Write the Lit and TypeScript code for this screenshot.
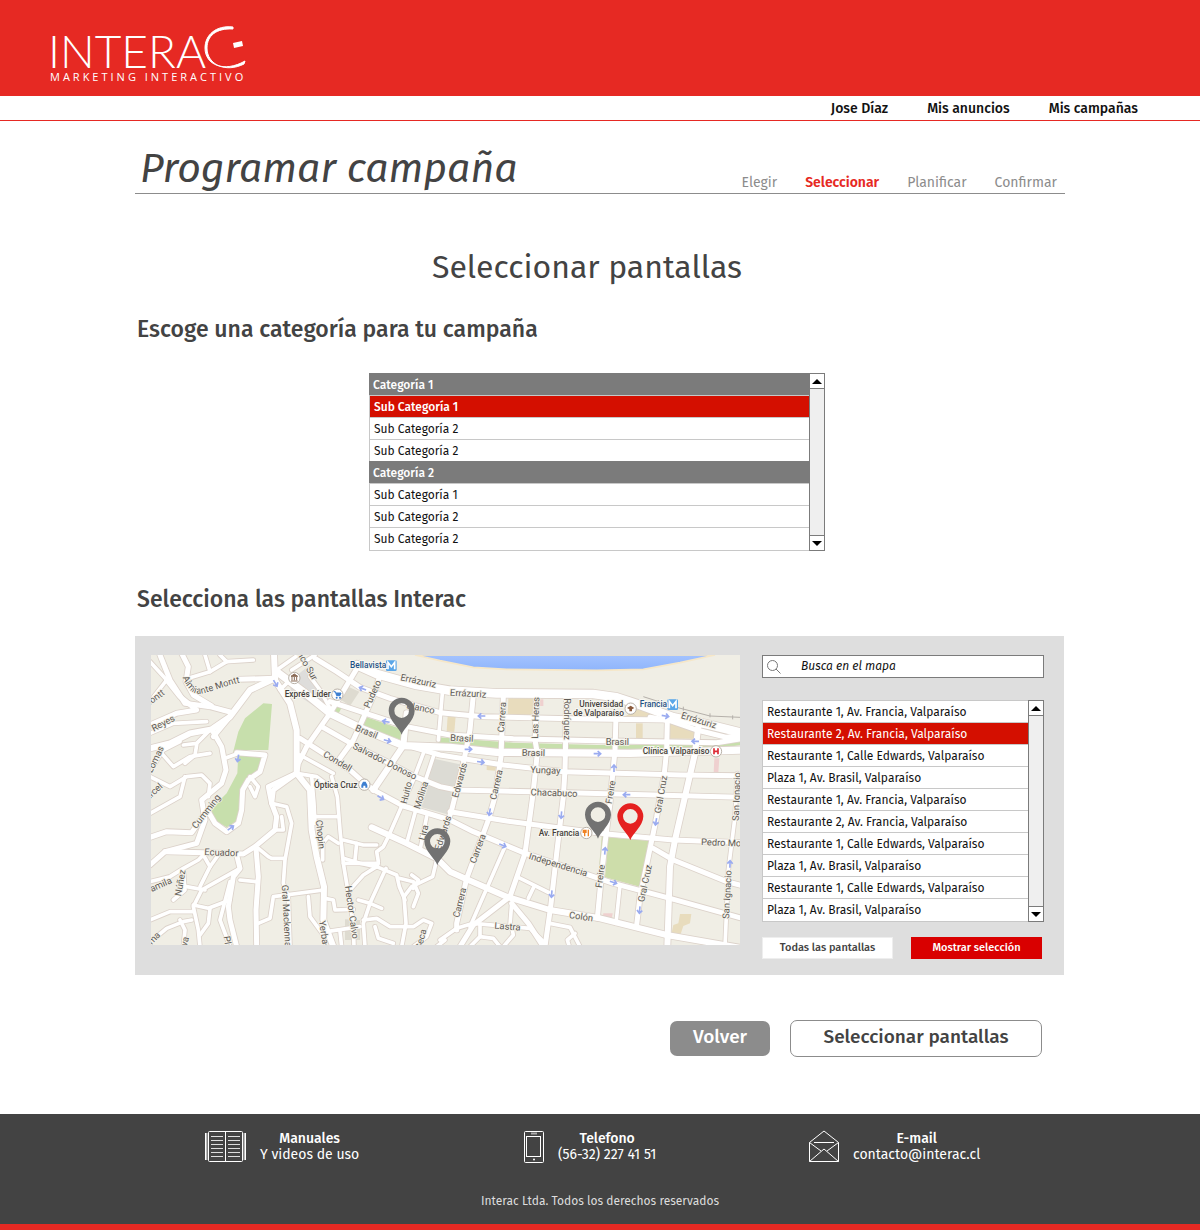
import { LitElement, html, svg, css } from "lit";
import { customElement, property, state } from "lit/decorators.js";
import { classMap } from "lit/directives/class-map.js";

const MAJOR = 22;
const MID = 15;
const MINOR = 11;

/* Streets: [width, points]. */
const ROADS: [number, string][] = [
  // east grid, west-east streets
  [26, "680,105 740,132 860,165 960,182 1100,190 1390,192 1460,202 1530,225 1630,262 1740,285 1840,310"],
  [MID, "1560,262 1620,272 1700,300 1790,322 1840,316"],
  [MID, "555,85 620,125 690,172 780,205 930,248 1060,260 1320,266 1610,270"],
  [MID, "600,215 700,248 830,290 960,315 1150,326 1400,332 1760,338 1840,325"],
  [MAJOR, "440,125 520,185 600,250 700,298 820,347 960,352 1100,367 1500,370 1840,360"],
  [MID, "850,352 930,375 1120,405 1300,425 1650,435 1840,437"],
  [MID, "575,290 680,350 780,400 855,440 930,470 980,480 1200,485 1840,502"],
  [MID, "960,545 1130,573 1430,612 1630,630 1840,638"],
  [MID, "510,325 580,370 660,420 710,465 740,485 820,528 960,570 1030,605 1180,668 1450,760 1620,805 1840,866"],
  [18, "725,592 830,640 920,685 960,725 1010,748 1130,800 1260,840 1410,865 1610,915 1840,955"],
  [MID, "1570,655 1630,690 1790,755 1840,768"],
  // east grid, north-south streets
  [MINOR, "937,190 925,330"],
  [MID, "1030,195 1020,300 1000,400 965,540 945,600 920,685"],
  [MID, "1120,200 1113,380 1095,500 1075,570 1010,745 980,880 980,900"],
  [MINOR, "1125,650 1020,890"],
  [MID, "1220,195 1215,330 1222,370 1208,500 1185,670 1140,800 1030,885 990,950"],
  [MID, "1310,195 1305,420 1300,500 1280,670 1262,830 1245,950"],
  [MID, "1458,260 1455,360 1440,520 1425,640 1412,760 1402,865"],
  [MINOR, "1470,765 1458,880"],
  [MID, "1612,270 1610,360 1602,440 1580,560 1555,680 1530,800 1520,885"],
  [18, "1705,290 1695,370 1665,500 1635,630 1620,710 1612,950"],
  [MINOR, "1822,430 1815,560 1795,720 1785,950"],
  [MINOR, "1165,742 1265,792"],
  [MINOR, "1212,770 1195,805"],
  [MID, "1145,820 1195,880 1240,950"],
  [MINOR, "1145,820 1140,885"],
  [MINOR, "930,930 980,895 1030,880 1200,895 1240,935"],
  [MINOR, "1050,885 1050,920 1020,950"],
  [MINOR, "1050,920 1090,925 1110,950"],
  [MINOR, "1145,890 1150,915 1120,950"],
  [MINOR, "1260,880 1320,892 1350,950"],
  [MINOR, "1335,910 1312,930 1318,950"],
  // centre
  [MID, "750,135 735,185 700,265 670,330 630,385"],
  [MID, "690,100 600,250 530,350 505,400 500,430 415,470 425,520"],
  [MINOR, "485,120 555,75"],
  [MINOR, "450,180 490,140"],
  [MINOR, "540,140 570,180 605,245"],
  [18, "830,250 820,347 730,480"],
  [MINOR, "880,370 850,450 810,540 775,620 760,650 740,665 745,695"],
  [MINOR, "910,380 860,530 830,640"],
  [MINOR, "890,560 870,660"],
  [MINOR, "510,375 610,430"],
  [MINOR, "640,700 745,700 740,710 700,735 655,785"],
  [MINOR, "640,685 690,700 745,712 800,735 808,770 825,810"],
  [MINOR, "680,640 675,690"],
  [MINOR, "640,630 700,645 740,645"],
  [MINOR, "768,715 720,820 700,880 705,950"],
  [MINOR, "920,690 908,740 845,770 822,800 828,880 815,950"],
  [MINOR, "808,745 850,755 865,790 850,830"],
  [MINOR, "845,735 865,750 850,775"],
  [MINOR, "700,870 740,865 780,890 850,890 880,870 905,880 890,920 850,950"],
  [MINOR, "735,890 745,925 790,940"],
  [MINOR, "685,810 720,820 755,835"],
  [MINOR, "920,950 945,930"],
  // western hills
  [18, "432,70 435,150 480,220 500,300 500,430 540,480 545,600 560,680 582,770 580,870 610,950"],
  [MINOR, "545,440 552,520 555,580"],
  [MINOR, "605,440 622,500 630,600 640,700 655,790 670,880 672,950"],
  [MINOR, "500,430 560,440 600,470"],
  [MINOR, "555,560 620,560"],
  [MINOR, "625,640 595,620 578,640 578,690"],
  [MINOR, "440,120 500,78"],
  [18, "435,145 360,180 300,260 245,298 180,310 120,340 60,355"],
  [MID, "325,148 435,145"],
  [MID, "90,75 120,150 165,220 240,230 300,246"],
  [MID, "155,70 175,110 168,155 190,195 245,228"],
  [MINOR, "60,95 110,150 60,215"],
  [MINOR, "175,145 240,125 290,95 370,90"],
  [MINOR, "240,125 225,75"],
  [MINOR, "290,95 270,75"],
  [MID, "110,150 150,200 200,240 140,250 60,285"],
  [MINOR, "60,310 130,280 230,275"],
  [MID, "245,298 275,350 288,420 275,460 215,510 225,570 200,640 105,665 60,705"],
  [MID, "60,622 110,605 185,608 225,550"],
  [MID, "300,260 250,320"],
  [MINOR, "240,300 200,340 160,345"],
  [MINOR, "200,345 195,375 165,400"],
  [MINOR, "95,370 130,410 180,380 240,370"],
  [MINOR, "75,400 100,360 150,335"],
  [MINOR, "60,440 120,470 170,440 215,435 240,460 235,500"],
  [MINOR, "60,550 150,500 165,440"],
  [MINOR, "285,385 320,372"],
  [MID, "320,368 405,375 390,425 355,450 338,480 335,540 325,580 290,605 255,580 235,545"],
  [MID, "500,430 430,480 425,520 440,560 435,600 375,650 340,672 220,668 105,665"],
  [MINOR, "360,440 385,470 375,500 360,470"],
  [MINOR, "425,520 470,530 485,580 465,690 460,760 475,800 480,950"],
  [MINOR, "435,600 460,600 455,560"],
  [MINOR, "385,655 415,680 425,685 465,685"],
  [MID, "378,655 385,740 378,840 380,950"],
  [MINOR, "385,880 420,865 430,800 580,780"],
  [MINOR, "535,800 540,860 580,915"],
  [MINOR, "585,805 610,810 615,840 670,838"],
  [MINOR, "590,905 690,890"],
  [MINOR, "630,905 635,950"],
  [MID, "320,675 330,715 310,740 295,830 300,870 320,950"],
  [MINOR, "330,715 250,760 215,780 190,830 205,900 210,950"],
  [MINOR, "300,755 270,870 300,950"],
  [MINOR, "330,750 378,755"],
  [MINOR, "60,755 120,740 160,715 205,690 230,665"],
  [MINOR, "265,675 240,710 210,770"],
  [MINOR, "220,675 240,710"],
  [MINOR, "170,770 225,780"],
  [MINOR, "160,720 165,780 130,810"],
  [MINOR, "60,870 120,845 190,845"],
  [MINOR, "80,920 110,895 160,875 185,870"],
  [MINOR, "150,870 165,900 160,950"],
  [MINOR, "190,825 235,835 300,810"],
  [MINOR, "240,835 235,880 210,915"],
];

const AREAS: [string, string][] = [
  ["#c7dfac", "400,220 426,222 415,360 325,360 308,372 325,305 345,265"],
  ["#c7dfac", "325,368 400,375 385,425 350,445 332,500 325,570 290,592 262,575 235,545 290,490 322,430"],
  ["#c7dfac", "692,256 822,300 812,330 684,280"],
  ["#c7dfac", "618,222 636,230 625,252 610,245"],
  ["#c7dfac", "925,322 1150,338 1400,345 1760,345 1830,336 1830,345 1760,358 1400,362 1100,355 925,342"],
  ["#cdddaa", "1435,622 1555,632 1535,772 1425,742"],
  ["#cdddaa", "1415,620 1425,622 1412,715 1407,715"],
  ["#dcdbd4", "905,385 1000,405 960,555 870,530"],
  ["#dedddb", "495,140 540,105 595,235 570,240 480,180"],
  ["#dedbd0", "650,168 688,185 660,228 634,210"],
  ["#e8dcbd", "1135,205 1210,205 1208,255 1133,255"],
  ["#e8dcbd", "953,258 977,258 973,306 950,304"],
  ["#e8dcbd", "1518,280 1538,280 1538,325 1518,325"],
  ["#e8dcbd", "1618,272 1698,295 1694,326 1618,326"],
  ["#e8dcbd", "1480,262 1530,235 1600,262"],
  ["#e8dcbd", "1070,406 1100,408 1095,422 1070,420"],
  ["#e8dcbd", "1650,852 1684,852 1680,880 1660,888 1652,912 1625,908 1630,885 1645,880"],
  ["#efd0cf", "1753,385 1768,385 1765,428 1751,428"],
  ["#efd0cf", "1228,208 1240,208 1240,228 1228,228"],
  ["#efd0cf", "1420,850 1448,850 1445,868 1418,866"],
  ["#dedbd0", "645,868 690,870 690,930 645,930"],
];

/* Street names: [text, x, y, rotation]. */
const STREETS: [string, number, number, number][] = [
  ["Errázuriz", 863, 162, 12],
  ["Errázuriz", 1014, 200, 3],
  ["Errázuriz", 1704, 280, 17],
  ["Brasil", 706, 314, 22],
  ["Brasil", 995, 334, 3],
  ["Brasil", 1462, 345, 0],
  ["Brasil", 1210, 378, 1],
  ["Yungay", 1246, 430, 2],
  ["Chacabuco", 1272, 498, 2],
  ["Condell", 618, 402, 31],
  ["Salvador Donoso", 760, 402, 27],
  ["Pudeto", 736, 196, -66],
  ["Blanco", 870, 243, 12],
  ["Huito", 838, 490, -76],
  ["Molina", 882, 498, -72],
  ["Lira", 890, 610, -76],
  ["Edwards", 998, 453, -75],
  ["Edwards", 948, 612, -72],
  ["Carrera", 1125, 262, -86],
  ["Carrera", 1108, 466, -77],
  ["Carrera", 1052, 659, -70],
  ["Carrera", 998, 820, -76],
  ["Las Heras", 1226, 264, -88],
  ["Rodríguez", 1303, 267, 90],
  ["Freire", 1451, 488, -80],
  ["Freire", 1420, 740, -82],
  ["Gral Cruz", 1602, 495, -80],
  ["Gral Cruz", 1554, 762, -78],
  ["San Ignacio", 1829, 500, -88],
  ["San Ignacio", 1801, 794, -87],
  ["Independencia", 1282, 713, 17],
  ["Pedro Montt", 1790, 648, 2],
  ["Colón", 1352, 869, 8],
  ["Lastra", 1132, 899, 4],
  ["Chopin", 562, 614, 84],
  ["Hector Calvo", 656, 848, 82],
  ["Gral Mackenna", 460, 858, 87],
  ["Yerbas Buenas", 580, 965, 82],
  ["Pla", 284, 940, 80],
  ["Ecuador", 274, 677, 2],
  ["Cumming", 236, 550, -52],
  ["Reyes", 104, 288, -28],
  ["Montt", 76, 214, -36],
  ["Camila", 88, 776, -24],
  ["Núñez", 160, 760, -80],
  ["Marcel", 68, 500, -42],
  ["Lomas", 84, 392, -64],
  ["Seca", 882, 930, -76],
  ["Loma", 68, 942, -46],
  ["Cueva", 168, 960, -76],
  ["Banco Sur", 516, 98, 60],
];

const ARROWS: [number, number, number][] = [
  [436, 160, 60], [698, 176, 200], [768, 275, 190], [772, 332, 15], [324, 385, 100],
  [302, 594, 325], [752, 503, 30], [1055, 258, 180], [1015, 358, 0], [1052, 396, 8],
  [1402, 371, 0], [1606, 258, 10], [1696, 334, 180], [1452, 415, 270], [1490, 494, 180],
  [1079, 546, 100], [1294, 555, 95], [1118, 646, 22], [1425, 663, 275], [1450, 757, 18],
  [1578, 575, 100], [1529, 840, 95], [1265, 792, 95], [1800, 702, 272],
];

const PINS: [number, number, boolean][] = [
  [815, 243, false],
  [922, 635, false],
  [1404, 555, false],
  [1501, 560, true],
];

@customElement("city-map")
class CityMap extends LitElement {
  static styles = css`
    :host { display: block; min-width: 0; }
    .map { display: block; width: 100%; height: auto; aspect-ratio: 1767 / 870; background: #f0eee5; }
    .street { font: 28px Roboto, "Liberation Sans", sans-serif; fill: #5f5a55; stroke: #f4f2ea; stroke-width: 5px; paint-order: stroke; text-anchor: middle; }
    .curved { text-anchor: start; }
    .place { font: 500 25px Roboto, "Liberation Sans", sans-serif; fill: #453f3b; stroke: #f8f7f2; stroke-width: 6px; paint-order: stroke; }
    .metro { fill: #1f5285; }
    .casing, .road { fill: none; stroke-linejoin: round; stroke-linecap: round; }
    .casing { stroke: #dcd2ca; }
    .road { stroke: #fff; }
    .arrow { fill: none; stroke: #9aabf0; stroke-width: 5px; }
  `;

  private spot(x: number, y: number) {
    return svg`<circle cx=${x} cy=${y} r="17" fill="#fff" stroke="#b9b2a8" stroke-width="3" />`;
  }

  private metro(x: number, y: number) {
    return svg`<rect x=${x - 16} y=${y - 16} width="32" height="32" rx="4" fill="#5aa6e8" />
      <path d="M${x - 10} ${y + 11}v-21l10 13 10-13v21" fill="none" stroke="#fff" stroke-width="5" />`;
  }

  render() {
    return html`<svg class="map" viewBox="63 75 1767 870" preserveAspectRatio="xMidYMid slice" role="img" aria-label="Mapa de Valparaíso">
      <defs>
        <linearGradient id="sea" x1="0" y1="0" x2="0" y2="1">
          <stop offset="0" stop-color="#a4c3ff" />
          <stop offset="1" stop-color="#8fb5fb" />
        </linearGradient>
        <path id="almirante" d="M158 142C172 178 190 196 218 190C250 184 285 166 340 156" />
      </defs>
      <path d="M855 75 930 92 1030 112 1130 118 1400 121 1540 118 1650 98 1755 75Z" fill="url(#sea)" stroke="#f6e7c8" stroke-width="5" />
      ${AREAS.map(([c, p]) => svg`<polygon points=${p} fill=${c} />`)}
      ${ROADS.map(([w, p]) => svg`<polyline class="casing" points=${p} stroke-width=${w + 5} />`)}
      ${ROADS.map(([w, p]) => svg`<polyline class="road" points=${p} stroke-width=${w} />`)}
      <path d="M1540 200 1640 232 1740 258 1830 262M1585 210v10M1660 230v12M1740 250v12M1808 256v12" fill="none" stroke="#b5b0aa" stroke-width="3" />
      ${ARROWS.map(([x, y, r]) => svg`<path class="arrow" transform="translate(${x} ${y}) rotate(${r})" d="M-11 0H9M1 -8 10 0 1 8" />`)}
      ${STREETS.map(([t, x, y, r]) => svg`<text class="street" transform="translate(${x} ${y}) rotate(${r})">${t}</text>`)}
      <text class="street curved"><textPath href="#almirante">Almirante Montt</textPath></text>

      ${this.spot(493, 144)}
      <path d="M483 139l10-7 10 7zM486 141v10M493 141v10M500 141v10M483 153h20" fill="#8a6a55" stroke="#8a6a55" stroke-width="3" />
      ${this.spot(622, 194)}
      <path d="M611 185h5l4 12h10l3-8h-15" fill="#3d7fd0" stroke="#3d7fd0" stroke-width="3" />
      <circle cx="620" cy="203" r="3" fill="#3d7fd0" /><circle cx="630" cy="203" r="3" fill="#3d7fd0" />
      ${this.spot(703, 464)}
      <path d="M694 473v-8l5-10h8l5 10v8h-6v-6h-6v6z" fill="#3d7fd0" />
      ${this.spot(1502, 236)}
      <path d="M1491 234l11-7 11 7-7 4v6h-8v-6z" fill="#8a5a3c" />
      ${this.spot(1758, 364)}
      <path d="M1752 355v18M1764 355v18M1752 364h12" fill="none" stroke="#dd2a35" stroke-width="5" />
      ${this.spot(1369, 609)}
      <path d="M1364 599v20M1360 599v8h8v-8M1375 599v20" fill="none" stroke="#f08322" stroke-width="4" />
      ${this.metro(784, 107)}
      ${this.metro(1628, 224)}

      <text class="place metro" x="660" y="115">Bellavista</text>
      <text class="place metro" x="1529" y="232">Francia</text>
      <text class="place" x="464" y="202">Exprés Líder</text>
      <text class="place" x="552" y="473">Óptica Cruz</text>
      <text class="place" x="1348" y="230">Universidad</text>
      <text class="place" x="1330" y="257">de Valparaíso</text>
      <text class="place" x="1538" y="371">Clínica Valparaíso</text>
      <text class="place" x="1226" y="617">Av. Francia</text>

      ${PINS.map(([x, y, on]) => svg`<path transform="translate(${x} ${y})" fill=${on ? "#e52120" : "#727272"} fill-rule="evenodd"
        d="M0 71C-5 52-39 28-39-1A39 39 0 1 1 39-1C39 28 5 52 0 71ZM0-23A22 22 0 1 0 0 21A22 22 0 1 0 0-23Z" />`)}
    </svg>`;
  }
}

interface Row {
  text: string;
  header?: boolean;
}

@customElement("scroll-list")
class ScrollList extends LitElement {
  @property({ attribute: false }) rows: Row[] = [];
  @property() label = "";
  @property({ type: Number }) selected = 1;
  @property({ type: Boolean }) strong = false;

  static styles = css`
    :host { display: grid; grid-template-columns: 1fr 16px; font-family: "Fira Sans", "Noto Sans", "Open Sans", sans-serif; }
    * { box-sizing: border-box; }
    .rows { list-style: none; margin: 0; padding: 0; border: 1px solid #c8c8c8; border-right: 0; background: #fff; min-width: 0; }
    .row { height: 22px; border-bottom: 1px solid #c8c8c8; }
    .row:last-child { border-bottom: 0; }
    .header { margin: -1px 0 0 -1px; height: 23px; background: #7b7b7b; color: #fff; font-size: 12px; line-height: 21px; font-weight: 500; padding: 2px 0 0 4px; }
    .item { display: block; width: 100%; height: 21px; border: 0; padding: 2px 4px 0; background: none; color: #111; font: 12px/19px "Fira Sans", "Noto Sans", "Open Sans", sans-serif; text-align: left; white-space: nowrap; }
    .on { background: #d40f00; color: #fff; }
    .strong { font-weight: 500; }
    .bar { display: flex; flex-direction: column; border: 1px solid #7b7b7b; background: #efefef; }
    .arrow { height: 15px; border: 0; padding: 0; background: #fff; display: grid; place-items: center; border-bottom: 1px solid #7b7b7b; }
    .down { margin-top: auto; border-bottom: 0; border-top: 1px solid #7b7b7b; }
  `;

  private move(step: number) {
    let next = this.selected + step;
    while (this.rows[next]?.header) next += step;
    if (this.rows[next]) this.selected = next;
  }

  render() {
    return html`
      <ul class="rows" aria-label=${this.label}>
        ${this.rows.map((r, i) => r.header
          ? html`<li class="row header">${r.text}</li>`
          : html`<li class="row"><button type="button"
              class=${classMap({ item: true, on: i === this.selected, strong: this.strong && i === this.selected })}
              aria-pressed=${i === this.selected ? "true" : "false"}
              @click=${() => (this.selected = i)}>${r.text}</button></li>`)}
      </ul>
      <div class="bar">
        <button type="button" class="arrow" aria-label="Subir" @click=${() => this.move(-1)}>
          <svg width="10" height="5" viewBox="0 0 10 5"><path d="M0 5 5 0l5 5z" /></svg>
        </button>
        <button type="button" class="arrow down" aria-label="Bajar" @click=${() => this.move(1)}>
          <svg width="10" height="5" viewBox="0 0 10 5"><path d="M0 0h10L5 5z" /></svg>
        </button>
      </div>`;
  }
}

const CATEGORIES: Row[] = [
  { text: "Categoría 1", header: true },
  { text: "Sub Categoría 1" },
  { text: "Sub Categoría 2" },
  { text: "Sub Categoría 2" },
  { text: "Categoría 2", header: true },
  { text: "Sub Categoría 1" },
  { text: "Sub Categoría 2" },
  { text: "Sub Categoría 2" },
];

const SCREENS: Row[] = [
  "Restaurante 1, Av. Francia, Valparaíso",
  "Restaurante 2, Av. Francia, Valparaíso",
  "Restaurante 1, Calle Edwards, Valparaíso",
  "Plaza 1, Av. Brasil, Valparaíso",
  "Restaurante 1, Av. Francia, Valparaíso",
  "Restaurante 2, Av. Francia, Valparaíso",
  "Restaurante 1, Calle Edwards, Valparaíso",
  "Plaza 1, Av. Brasil, Valparaíso",
  "Restaurante 1, Calle Edwards, Valparaíso",
  "Plaza 1, Av. Brasil, Valparaíso",
].map((text) => ({ text }));

const STEPS = ["Elegir", "Seleccionar", "Planificar", "Confirmar"];

@customElement("app-root")
class AppRoot extends LitElement {
  @state() private step = 1;

  static styles = css`
    :host { display: block; background: #fff; color: #434343; font-family: "Fira Sans", "Noto Sans", "Open Sans", sans-serif; }
    * { box-sizing: border-box; }
    a { color: inherit; text-decoration: none; }
    .top { background: #e62923; height: 96px; padding: 24px 48px; }
    .logo { display: block; }
    .word { font: 300 46px Lato, "Open Sans", sans-serif; fill: #fff; }
    .tag { font: 11px "Open Sans", "Noto Sans", sans-serif; letter-spacing: 3px; fill: #fff; }
    .nav { display: flex; justify-content: flex-end; gap: 39px; padding: 2px 62px 0; border-bottom: 1px solid #e62923; color: #111; font-size: 14px; line-height: 22px; font-weight: 500; }
    .main { max-width: 930px; margin: 0 auto; }
    .head { display: flex; justify-content: space-between; align-items: flex-end; border-bottom: 1px solid #8c8c8c; padding: 24px 8px 0 5px; }
    .title { margin: 0; font-size: 41px; line-height: 48px; font-style: italic; font-weight: 400; }
    .steps { display: flex; gap: 28px; list-style: none; margin: 0; padding: 0; color: #8c8c8c; font-size: 14px; line-height: 20px; }
    .current { color: #e62923; font-weight: 600; }
    .screen-title { margin: 49px 26px 0 0; text-align: center; font-size: 32px; line-height: 48px; font-weight: 400; }
    .section { margin: 22px 0 0; padding-left: 2px; font-size: 23px; line-height: 32px; font-weight: 500; }
    .category-box { display: grid; grid-template-columns: minmax(0, 456px); justify-content: center; margin-top: 28px; padding-right: 6px; }
    .second { margin-top: 32px; }
    .panel { display: grid; grid-template-columns: minmax(0, 1fr) 282px; gap: 22px; align-items: start; margin: 21px 1px 0 0; padding: 19px 20px 16px 16px; background: #dedede; }
    .side { display: flex; flex-direction: column; }
    .search { display: flex; align-items: center; height: 23px; margin-bottom: 22px; padding-left: 4px; gap: 20px; border: 1px solid #7b7b7b; background: #fff; }
    .glass { flex: none; }
    .query { flex: 1; min-width: 0; border: 0; padding: 0; background: none; outline: 0; color: #111; font: italic 12px/19px "Fira Sans", "Noto Sans", "Open Sans", sans-serif; }
    .query::placeholder { color: #111; opacity: 1; }
    .choices { display: grid; grid-template-columns: 1fr 1fr; gap: 18px; margin-top: 15px; padding-right: 2px; }
    .choice { height: 22px; border: 1px solid #eee; padding: 0; background: #fff; color: #434343; font: 500 11px/18px "Fira Sans", "Noto Sans", "Open Sans", sans-serif; }
    .show { border-color: #d90000; background: #d90000; color: #fff; }
    .actions { display: flex; justify-content: flex-end; align-items: center; gap: 20px; padding: 45px 23px 57px 0; }
    .action { border-radius: 7px; padding: 0 0 4px; font: 500 19px/28px "Fira Sans", "Noto Sans", "Open Sans", sans-serif; }
    .back { width: 100px; height: 35px; border: 0; background: #8c8c8c; color: #fff; }
    .go { width: 252px; height: 37px; border: 1px solid #8c8c8c; background: #fff; color: #434343; }
    .foot { background: #434343; color: #fff; border-bottom: 6px solid #e62923; padding: 16px 24px 13px; text-align: center; }
    .contacts { display: grid; grid-template-columns: 319fr 285fr 172fr; max-width: 790px; margin: 0 auto; padding-right: 14px; }
    .contact { display: flex; align-items: center; gap: 14px; font-size: 14px; line-height: 16px; white-space: nowrap; }
    .contact b { display: block; font-weight: 500; }
    .legal { margin: 28px 0 0; font-size: 12px; line-height: 20px; color: #ddd; }
    @media (max-width: 800px) {
      .panel { grid-template-columns: 1fr; }
      .head { flex-wrap: wrap; }
      .contacts { grid-template-columns: 1fr; gap: 16px; }
    }
  `;

  render() {
    return html`
      <header>
        <div class="top">
          <svg class="logo" width="200" height="62" viewBox="0 0 200 62" role="img" aria-label="Interac Marketing Interactivo">
            <text class="word" x="0" y="44">INTERA</text>
            <path d="M185 3C168 1 157 11 157 24C157 41 176 49 197 37L196 40C178 49 159 41 159 24C159 12 168 4 185 5Z" fill="#fff" stroke="#fff" />
            <path d="M185 19 194 17 195 22 186 24Z" fill="#fff" />
            <text class="tag" x="2" y="57">MARKETING INTERACTIVO</text>
          </svg>
        </div>
        <nav class="nav">
          <a href="#cuenta">Jose Díaz</a>
          <a href="#anuncios">Mis anuncios</a>
          <a href="#campanas">Mis campañas</a>
        </nav>
      </header>
      <main class="main">
        <div class="head">
          <h1 class="title">Programar campaña</h1>
          <ol class="steps">
            ${STEPS.map((s, i) => html`<li class=${classMap({ current: i === this.step })}>${s}</li>`)}
          </ol>
        </div>
        <h2 class="screen-title">Seleccionar pantallas</h2>
        <h3 class="section">Escoge una categoría para tu campaña</h3>
        <div class="category-box">
          <scroll-list label="Categorías" strong .rows=${CATEGORIES}></scroll-list>
        </div>
        <h3 class="section second">Selecciona las pantallas Interac</h3>
        <section class="panel">
          <city-map></city-map>
          <div class="side">
            <label class="search">
              <svg class="glass" width="14" height="14" viewBox="0 0 14 14" fill="none" stroke="#777" aria-hidden="true">
                <circle cx="5.5" cy="5.5" r="5" /><path d="M9 9l4.5 4.5" />
              </svg>
              <input class="query" type="text" placeholder="Busca en el mapa" aria-label="Busca en el mapa" />
            </label>
            <scroll-list label="Pantallas" .rows=${SCREENS}></scroll-list>
            <div class="choices">
              <button type="button" class="choice">Todas las pantallas</button>
              <button type="button" class="choice show">Mostrar selección</button>
            </div>
          </div>
        </section>
        <div class="actions">
          <button type="button" class="action back" @click=${() => (this.step = Math.max(0, this.step - 1))}>Volver</button>
          <button type="button" class="action go" @click=${() => (this.step = Math.min(3, this.step + 1))}>Seleccionar pantallas</button>
        </div>
      </main>
      <footer class="foot">
        <div class="contacts">
          <a class="contact" href="#manuales">
            <svg width="41" height="32" viewBox="0 0 41 32" fill="none" stroke="#fff" aria-hidden="true">
              <rect x="3.5" y=".5" width="34" height="30" rx="1" />
              <path d="M20.500 .500v30" />
              <path d="M1.500 2v27M39.500 2v27" stroke="#bbb" stroke-width="2" />
              <path d="M.500 2v27M40.500 2v27" />
              <path d="M6 5.500h12M6 9.500h12M6 13.500h12M6 17.500h12M6 21.500h12M6 25.500h12M23 5.500h12M23 9.500h12M23 13.500h12M23 17.500h12M23 21.500h12M23 25.500h12" stroke="#ddd" />
            </svg>
            <span><b>Manuales</b>Y videos de uso</span>
          </a>
          <a class="contact" href="tel:+56322274151">
            <svg width="20" height="32" viewBox="0 0 20 32" fill="none" stroke="#fff" aria-hidden="true">
              <rect x=".5" y=".5" width="19" height="31" rx="1" /><rect x="2.500" y="5.500" width="14" height="20" />
              <path d="M7 2.500h6" stroke="#aaa" stroke-width="2" /><circle cx="10" cy="28.500" r="1" fill="#fff" stroke="none" />
            </svg>
            <span><b>Telefono</b>(56-32) 227 41 51</span>
          </a>
          <a class="contact" href="mailto:contacto@interac.cl">
            <svg width="30" height="33" viewBox="0 0 30 33" fill="none" stroke="#fff" aria-hidden="true">
              <path d="M.500 12.500 15 1l14.500 11.500v19H.500zM.500 12.500 12 21M29.500 12.500 18 21M.500 31.500 15 19l14.500 12.500M5 12.500h20" />
            </svg>
            <span><b>E-mail</b>contacto@interac.cl</span>
          </a>
        </div>
        <p class="legal">Interac Ltda. Todos los derechos reservados</p>
      </footer>`;
  }
}
